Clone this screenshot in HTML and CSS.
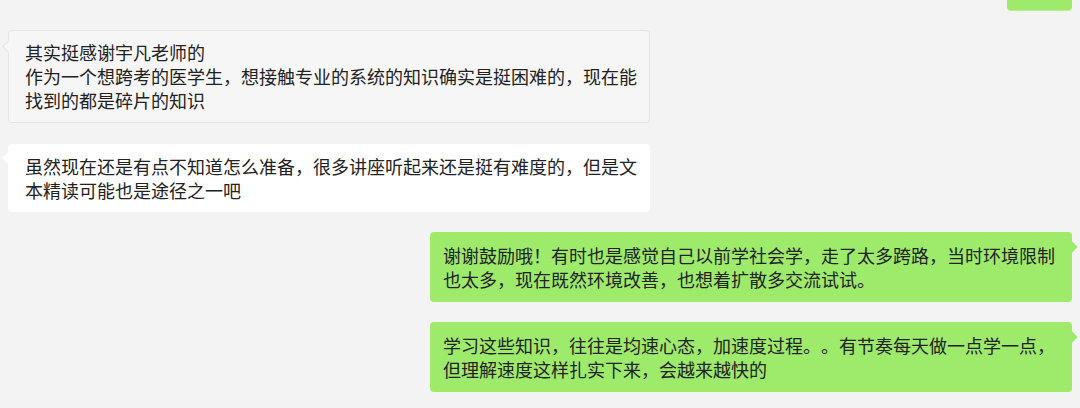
FILE: index.html
```html
<!DOCTYPE html>
<html lang="zh-CN">
<head>
<meta charset="utf-8">
<title>聊天记录</title>
<link rel="stylesheet" href="styles.css">
</head>
<body>
<div class="chat">
  <div class="msg msg-self msg-cut"></div>
  <div class="msg msg-other msg-grey">其实挺感谢宇凡老师的<br>作为一个想跨考的医学生，想接触专业的系统的知识确实是挺困难的，现在能找到的都是碎片的知识</div>
  <div class="msg msg-other msg-white">虽然现在还是有点不知道怎么准备，很多讲座听起来还是挺有难度的，但是文本精读可能也是途径之一吧</div>
  <div class="msg msg-self">谢谢鼓励哦！有时也是感觉自己以前学社会学，走了太多跨路，当时环境限制也太多，现在既然环境改善，也想着扩散多交流试试。</div>
  <div class="msg msg-self">学习这些知识，往往是均速心态，加速度过程。。有节奏每天做一点学一点，但理解速度这样扎实下来，会越来越快的</div>
</div>
</body>
</html>
```

FILE: styles.css
```css
* { box-sizing: border-box; }
html, body {
  margin: 0;
  padding: 0;
  background: #f3f3f3;
}
body {
  width: 1080px;
  height: 408px;
  overflow: hidden;
  font-family: "Noto Sans CJK SC", "Microsoft YaHei", sans-serif;
}
.chat {
  display: flex;
  flex-direction: column;
  gap: 20px;
  padding: 0 8px;
}
.msg {
  position: relative;
  width: 642px;
  font-size: 18px;
  line-height: 24px;
  color: #222222;
  border-radius: 4px;
  word-break: break-all;
  text-spacing-trim: space-all;
}
.msg-other {
  align-self: flex-start;
}
.msg-grey {
  background: #f6f6f6;
  border: 1px solid #e4e4e4;
  padding: 9px 12px 10px 16px;
  margin-bottom: 1px;
}
.msg-grey::before {
  content: "";
  position: absolute;
  left: -5px;
  top: 11px;
  width: 8px;
  height: 8px;
  background: #f6f6f6;
  border-left: 1px solid #e4e4e4;
  border-bottom: 1px solid #e4e4e4;
  transform: rotate(45deg);
}
.msg-white {
  background: #ffffff;
  padding: 10px 12px 10px 17px;
}
.msg-white::before {
  content: "";
  position: absolute;
  left: -4px;
  top: 10px;
  width: 8px;
  height: 8px;
  background: #ffffff;
  transform: rotate(45deg);
}
.msg-self {
  align-self: flex-end;
  background: #9eea6a;
  padding: 11px 17px 11px 13px;
}
.msg-self::after {
  content: "";
  position: absolute;
  right: -4px;
  top: 11px;
  width: 8px;
  height: 8px;
  background: #9eea6a;
  transform: rotate(45deg);
}
.msg-cut {
  width: 65px;
  height: 10px;
  padding: 0;
  border-radius: 0 0 4px 4px;
  box-shadow: 0 1px 0 #b6ee90;
}
.msg-cut::after {
  display: none;
}
```
